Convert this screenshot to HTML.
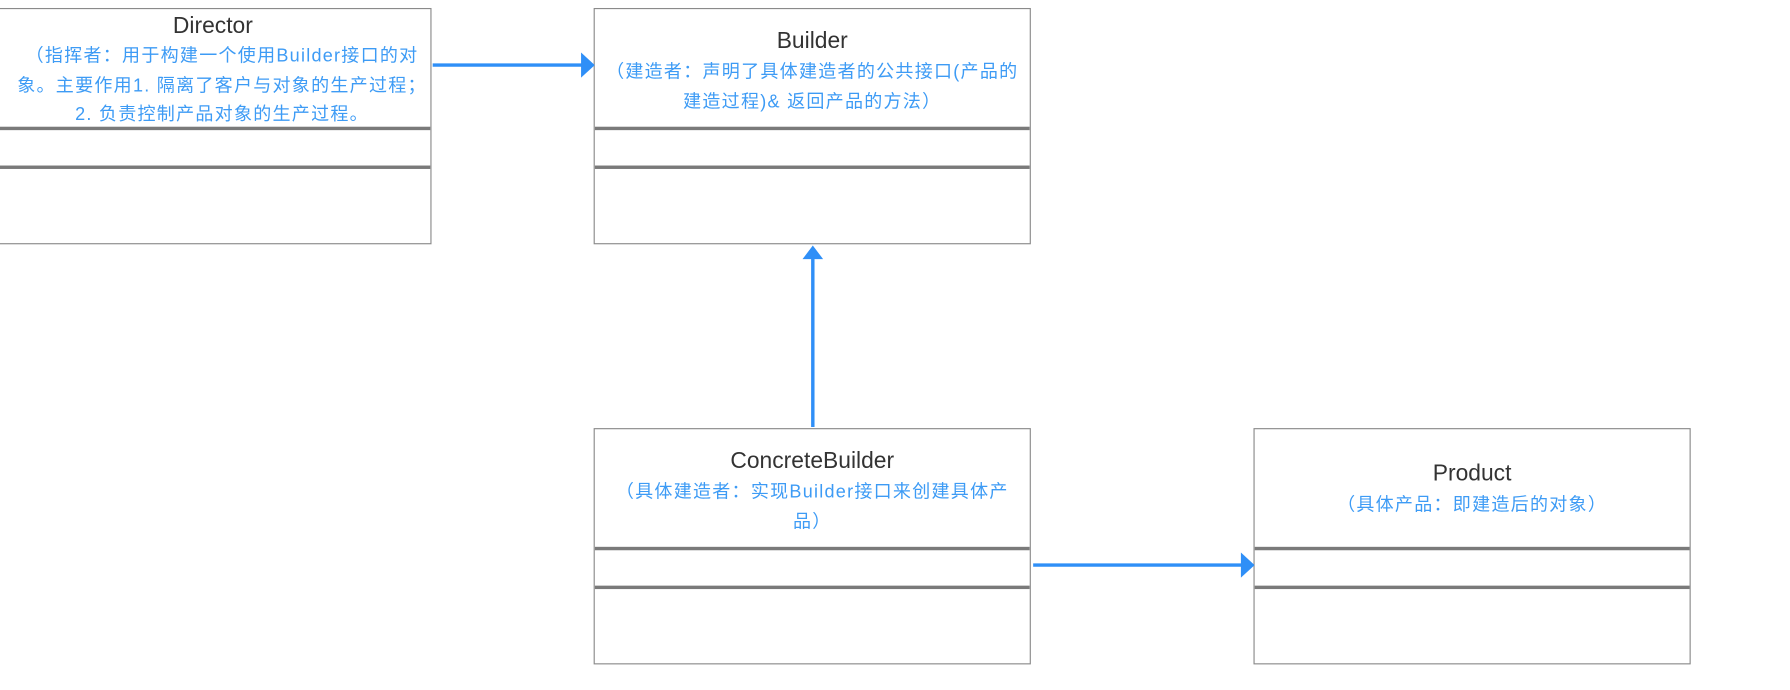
<!DOCTYPE html>
<html><head><meta charset="utf-8"><style>
html,body{margin:0;padding:0;background:#fff;width:1790px;height:690px;overflow:hidden}
#s{position:absolute;left:0;top:0;width:1568px;height:604px;transform:scale(1.1416);transform-origin:0 0}
.b{position:absolute;width:383px;height:207px;border:1.3px solid #8a8a8a;box-sizing:border-box;background:#fff;overflow:hidden}
.d{position:absolute;left:0;right:0;height:2.5px;background:#7a7a7a}
.t{position:absolute;left:0;right:0;text-align:center;font-family:"Liberation Sans","Noto Sans CJK SC",sans-serif;color:#333;font-size:20px;line-height:22px}
.c{position:absolute;left:-40px;right:-40px;text-align:center;white-space:nowrap;font-family:"Liberation Sans","Noto Sans CJK SC",sans-serif;color:#3d9bf5;font-size:15.8px;letter-spacing:1.1px;line-height:25.5px}
svg{position:absolute;left:0;top:0}
</style></head><body><div id="s">
<div class="b" style="left:-5px;top:7px">
<div class="t" style="top:4px">Director</div>
<div class="c" style="top:29px;left:-36px;right:-52px">（指挥者：用于构建一个使用Builder接口的对<br>象。主要作用1. 隔离了客户与对象的生产过程；<br>2. 负责控制产品对象的生产过程。</div>
<div class="d" style="top:103px"></div><div class="d" style="top:137px"></div>
</div>
<div class="b" style="left:520px;top:7px">
<div class="t" style="top:17px">Builder</div>
<div class="c" style="top:43px">（建造者：声明了具体建造者的公共接口(产品的<br>建造过程)&amp; 返回产品的方法）</div>
<div class="d" style="top:103px"></div><div class="d" style="top:137px"></div>
</div>
<div class="b" style="left:520px;top:375px">
<div class="t" style="top:17px">ConcreteBuilder</div>
<div class="c" style="top:43px">（具体建造者：实现Builder接口来创建具体产<br>品）</div>
<div class="d" style="top:103px"></div><div class="d" style="top:137px"></div>
</div>
<div class="b" style="left:1098px;top:375px">
<div class="t" style="top:28px">Product</div>
<div class="c" style="top:54px">（具体产品：即建造后的对象）</div>
<div class="d" style="top:103px"></div><div class="d" style="top:137px"></div>
</div>
<svg width="1568" height="604">
<g stroke="#2f8ff7" stroke-width="3" fill="#2f8ff7">
<line x1="379" y1="57" x2="512" y2="57"/>
<polygon points="509,46 521,57 509,68" stroke="none"/>
<line x1="712" y1="374" x2="712" y2="224"/>
<polygon points="703,227 712,215 721,227" stroke="none"/>
<line x1="905" y1="495" x2="1090" y2="495"/>
<polygon points="1087,484 1099,495 1087,506" stroke="none"/>
</g></svg>
</div></body></html>
